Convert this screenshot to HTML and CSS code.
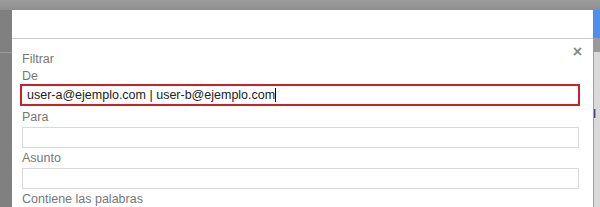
FILE: index.html
```html
<!DOCTYPE html>
<html>
<head>
<meta charset="utf-8">
<link rel="stylesheet" href="styles.css">
</head>
<body>
<div class="topbar"></div>
<div class="main">
  <div class="left-strip"><div class="left-line"></div></div>
  <div class="dialog">
    <div class="dialog-head"></div>
    <div class="filter">
      <div class="close">×</div>
      <div class="label title">Filtrar</div>
      <div class="label">De</div>
      <div class="input active">user-a@ejemplo.com | user-b@ejemplo.com<span class="caret"></span></div>
      <div class="label">Para</div>
      <div class="input"></div>
      <div class="label">Asunto</div>
      <div class="input"></div>
      <div class="label">Contiene las palabras</div>
    </div>
  </div>
  <div class="right-strip">
    <div class="blue"></div>
    <div class="rs-gray"></div>
    <div class="rs-light"><span class="rs-text">al</span></div>
  </div>
</div>
</body>
</html>
```
FILE: styles.css
```css
html, body { margin: 0; padding: 0; }
body {
  width: 600px; height: 207px; overflow: hidden;
  background: #858585;
  font-family: "Liberation Sans", Arial, sans-serif;
  font-size: 12.5px;
}
.topbar { height: 10px; background: linear-gradient(#9c9c9c, #8e8e8e); }
.main { display: flex; height: 197px; }
.left-strip { width: 12px; background: #808080; }
.left-line { margin-top: 42px; height: 1px; background: #9a9a9a; }
.dialog { width: 581px; background: #fff; display: flex; flex-direction: column; }
.dialog-head { height: 28px; border-bottom: 1px solid #cfcfcf; }
.filter { position: relative; padding: 13px 0 0 8px; color: #777; }
.close { position: absolute; right: 11px; top: 5px; font-size: 16px; line-height: 16px; color: #888; font-weight: bold; }
.label { line-height: 15px; margin-left: 2px; }
.label.title { margin-bottom: 2px; }
.input {
  box-sizing: border-box;
  height: 21px; width: 557px; border: 1px solid #d9d9d9;
  margin: 2px 0 3px 2px;
}
.input.active {
  height: 22px; width: 560px; border: 2px solid #c8232c;
  margin: 0 0 4px 0; padding-left: 5px;
  color: #222; line-height: 18px;
}
.caret { display: inline-block; width: 1px; height: 14px; background: #000; vertical-align: -3px; }
.right-strip { width: 7px; display: flex; flex-direction: column; }
.blue { height: 28px; background: #4d8ef0; }
.rs-gray { height: 14px; background: #9a9a9a; }
.rs-light { flex: 1; background: #d9d9d9; border-left: 1px solid #a0a0a0; position: relative; overflow: hidden; }
.rs-text { position: absolute; left: -8px; top: 55px; color: #2a4a9a; font-weight: bold; font-size: 12px; line-height: 14px; }
```
